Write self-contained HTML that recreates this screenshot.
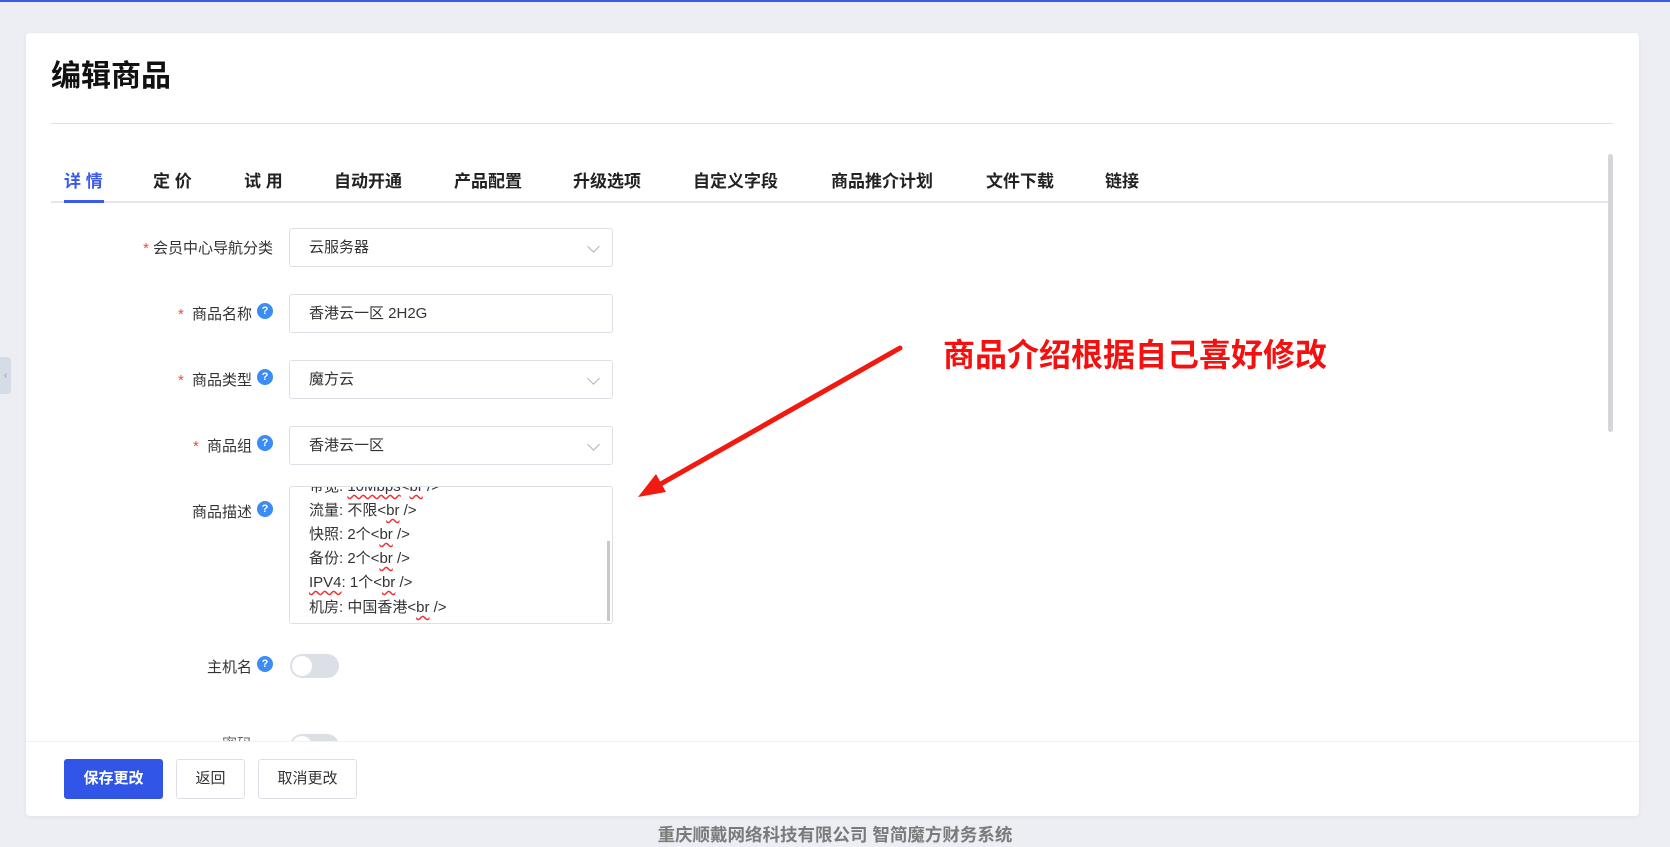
<!DOCTYPE html>
<html><head><meta charset="utf-8"><style>
*{margin:0;padding:0;box-sizing:border-box}
body{width:1670px;height:847px;background:#eceef3;font-family:"Liberation Sans","Noto Sans CJK SC",sans-serif;position:relative;overflow:hidden;color:#333}
.topline{position:absolute;left:0;top:0;width:1670px;height:2px;background:#3a5ae8}
.card{position:absolute;left:26px;top:33px;width:1613px;height:783px;background:#fff;border-radius:4px;box-shadow:0 1px 4px rgba(0,0,0,.06)}
.title{position:absolute;left:51px;top:51px;font-size:30px;font-weight:bold;color:#111}
.div{position:absolute;left:51px;top:123px;width:1562px;height:1px;background:#dfe1e6}
.tabs{position:absolute;left:51px;top:201px;width:1558px;height:2px;background:#e3e6ee}
.tab{position:absolute;top:167px;font-size:17px;font-weight:bold;color:#222;white-space:nowrap}
.tab.a{color:#3a5ae8}
.ul{position:absolute;left:64px;top:200px;width:40px;height:3px;background:#3a5ae8}
.lbl{position:absolute;font-size:15px;color:#333;text-align:right;white-space:nowrap}
.lbl .s{color:#f04a3a;margin-right:4px}
.q{position:absolute;width:16px;height:16px;border-radius:50%;background:#3b8cf5;color:#fff;font-size:11px;text-align:center;line-height:16px;font-weight:bold}
.in{position:absolute;left:289px;width:324px;height:39px;border:1px solid #dcdfe6;border-radius:3px;font-size:15px;padding-left:19px;line-height:37px;color:#333}
.chev{position:absolute;right:14px;top:13px;width:9px;height:9px;border-right:1px solid #b0b4bc;border-bottom:1px solid #b0b4bc;transform:rotate(45deg)}
.ta{position:absolute;left:289px;top:486px;width:324px;height:138px;border:1px solid #dcdfe6;border-radius:3px;overflow:hidden;font-size:15px}
.ta div{position:absolute;left:19px;white-space:nowrap}
.wv{text-decoration:underline wavy #e33;text-underline-offset:3px}
.tg{position:absolute;left:290px;width:49px;height:24px;border-radius:12px;background:#dcdfe6}
.tg:after{content:"";position:absolute;left:2px;top:2px;width:20px;height:20px;border-radius:50%;background:#fff}
.foot{position:absolute;left:26px;top:741px;width:1613px;height:75px;background:#fff;border-top:1px solid #f0f1f4;border-radius:0 0 4px 4px}
.btn{position:absolute;top:759px;height:40px;border:1px solid #dcdfe6;border-radius:3px;font-size:15px;text-align:center;line-height:38px;background:#fff;color:#333}
.cp{position:absolute;left:0;width:1670px;top:822px;text-align:center;font-size:17.5px;color:#7a7a7a;font-weight:bold}
</style></head><body>
<div class="topline"></div>
<div style="position:absolute;left:0;top:357px;width:11px;height:37px;background:#d6dbe8;border-radius:0 4px 4px 0;color:#999;font-size:10px;line-height:37px;text-align:center">‹</div>
<div class="card"></div>
<div class="title">编辑商品</div>
<div class="div"></div>
<div class="tabs"></div>
<div class="tab a" style="left:64px">详 情</div>
<div class="tab" style="left:153px">定 价</div>
<div class="tab" style="left:244px">试 用</div>
<div class="tab" style="left:334px">自动开通</div>
<div class="tab" style="left:454px">产品配置</div>
<div class="tab" style="left:573px">升级选项</div>
<div class="tab" style="left:693px">自定义字段</div>
<div class="tab" style="left:831px">商品推介计划</div>
<div class="tab" style="left:986px">文件下载</div>
<div class="tab" style="left:1105px">链接</div>
<div class="ul"></div>
<div style="position:absolute;left:1608px;top:154px;width:5px;height:278px;background:#d4d6da;border-radius:3px"></div>

<div class="lbl" style="right:1397px;top:237px"><span class="s">*</span>会员中心导航分类</div>
<div class="in" style="top:228px">云服务器<span class="chev"></span></div>

<div class="lbl" style="right:1418px;top:303px"><span class="s">*</span> 商品名称</div><div class="q" style="left:257px;top:303px">?</div>
<div class="in" style="top:294px">香港云一区 2H2G</div>

<div class="lbl" style="right:1418px;top:369px"><span class="s">*</span> 商品类型</div><div class="q" style="left:257px;top:369px">?</div>
<div class="in" style="top:360px">魔方云<span class="chev"></span></div>

<div class="lbl" style="right:1418px;top:435px"><span class="s">*</span> 商品组</div><div class="q" style="left:257px;top:435px">?</div>
<div class="in" style="top:426px">香港云一区<span class="chev"></span></div>

<div class="lbl" style="right:1418px;top:501px">商品描述</div><div class="q" style="left:257px;top:501px">?</div>
<div class="ta">
<div style="top:-12px">带宽: <span class="wv">10Mbps</span>&lt;<span class="wv">br</span> /&gt;</div>
<div style="top:12px">流量: 不限&lt;<span class="wv">br</span> /&gt;</div>
<div style="top:36px">快照: 2个&lt;<span class="wv">br</span> /&gt;</div>
<div style="top:60px">备份: 2个&lt;<span class="wv">br</span> /&gt;</div>
<div style="top:84px"><span class="wv">IPV4</span>: 1个&lt;<span class="wv">br</span> /&gt;</div>
<div style="top:109px">机房: 中国香港&lt;<span class="wv">br</span> /&gt;</div>
<span style="position:absolute;right:2px;top:54px;width:3px;height:80px;background:#c8c8c8"></span>
</div>

<div class="lbl" style="right:1418px;top:656px">主机名</div><div class="q" style="left:257px;top:656px">?</div>
<div class="tg" style="top:654px"></div>
<div class="lbl" style="right:1418px;top:733px;color:#666">密码</div>
<div class="tg" style="top:734px"></div>

<div class="foot"></div>
<div class="btn" style="left:64px;width:99px;background:#3155e6;border-color:#3155e6;color:#fff;font-weight:bold">保存更改</div>
<div class="btn" style="left:176px;width:69px">返回</div>
<div class="btn" style="left:258px;width:99px">取消更改</div>
<div class="cp">重庆顺戴网络科技有限公司 智简魔方财务系统</div>

<svg style="position:absolute;left:0;top:0" width="1670" height="847">
<line x1="900" y1="348" x2="650" y2="490" stroke="#f01a10" stroke-width="5" stroke-linecap="round"/>
<polygon points="638,497 656,474 666,492" fill="#f01a10"/>
</svg>
<div style="position:absolute;left:943px;top:330px;font-size:32px;font-weight:bold;color:#f51010;white-space:nowrap">商品介绍根据自己喜好修改</div>
</body></html>
